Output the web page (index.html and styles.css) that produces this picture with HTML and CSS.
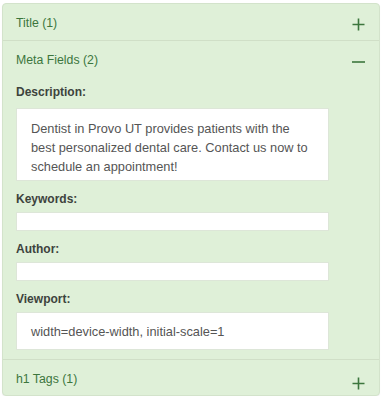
FILE: index.html
```html
<!DOCTYPE html>
<html>
<head>
<meta charset="utf-8">
<link rel="stylesheet" href="styles.css">
</head>
<body>
<div class="panel">
  <div class="heading">
    <span class="heading-title">Title (1)</span>
    <svg class="icon" width="13" height="13" viewBox="0 0 13 13"><path d="M6.5 0.5v12M0.5 6.5h12" stroke="#3c763d" stroke-width="1.6" fill="none"/></svg>
  </div>
  <div class="heading divided">
    <span class="heading-title">Meta Fields (2)</span>
    <svg class="icon" width="13" height="13" viewBox="0 0 13 13"><path d="M0 7h13" stroke="#3c763d" stroke-width="1.6" fill="none"/></svg>
  </div>
  <div class="body">
    <div class="label first">Description:</div>
    <div class="box multi">Dentist in Provo UT provides patients with the best personalized dental care. Contact us now to schedule an appointment!</div>
    <div class="label">Keywords:</div>
    <div class="box empty"></div>
    <div class="label">Author:</div>
    <div class="box empty"></div>
    <div class="label">Viewport:</div>
    <div class="box single">width=device-width, initial-scale=1</div>
  </div>
  <div class="heading divided">
    <span class="heading-title">h1 Tags (1)</span>
    <svg class="icon icon-low" width="13" height="13" viewBox="0 0 13 13"><path d="M6.5 0.5v12M0.5 6.5h12" stroke="#3c763d" stroke-width="1.6" fill="none"/></svg>
  </div>
</div>
</body>
</html>
```

FILE: styles.css
```css
html, body {
  margin: 0;
  padding: 0;
  background: #ffffff;
}

body {
  font-family: "Liberation Sans", Arial, sans-serif;
  font-size: 14px;
  line-height: 20px;
}

.panel {
  margin: 3px 0 0 2px;
  width: 376px;
  height: 391px;
  background: #dff0d8;
  border: 1px solid #d3e3cb;
  border-radius: 4px;
  box-shadow: 0 1px 1px rgba(0, 0, 0, 0.05);
  display: flex;
  flex-direction: column;
}

.heading {
  display: flex;
  justify-content: space-between;
  align-items: flex-start;
  padding: 9px 14px 7px 13px;
  color: #3c763d;
}

.heading-title {
  font-size: 12.3px;
}

.heading.divided {
  border-top: 1px solid #d0dfc7;
}

.heading:last-child {
  flex: 1;
}

.icon {
  margin-top: 5px;
  flex: none;
}

.icon-low {
  margin-top: 8px;
}

.body {
  padding: 5px 13px 9px 13px;
}

.label {
  font-size: 12px;
  font-weight: bold;
  color: #3d433d;
  margin-top: 8px;
  margin-bottom: 3px;
}

.label.first {
  margin-top: 0;
  margin-bottom: 6px;
}

.box {
  width: 311px;
  background: #ffffff;
  border: 1px solid #dde6d8;
  color: #555555;
  font-size: 12.8px;
}

.multi {
  padding: 10px 14px 5px 14px;
  line-height: 19px;
  box-sizing: border-box;
  width: 313px;
  height: 73px;
}

.empty {
  height: 17px;
}

.single {
  box-sizing: border-box;
  width: 313px;
  height: 38px;
  padding: 9px 14px;
}
```
